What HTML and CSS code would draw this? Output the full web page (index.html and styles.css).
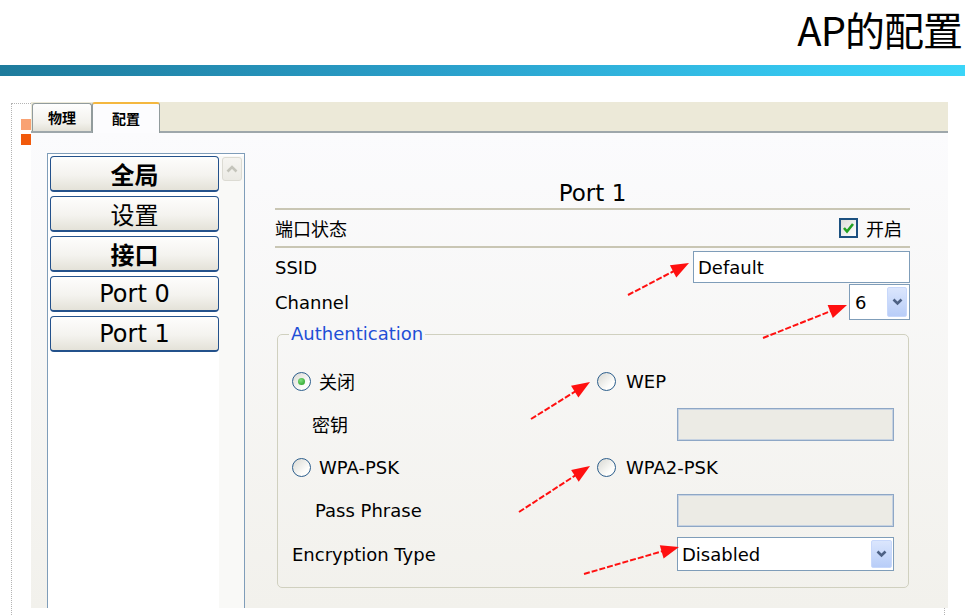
FILE: index.html
```html
<!DOCTYPE html>
<html>
<head>
<meta charset="utf-8">
<title>AP的配置</title>
<link rel="stylesheet" href="styles.css">
</head>
<body>
<header class="head"><h1 class="title">AP的配置</h1></header>
<div class="bar"></div>
<div class="frame">
  <div class="gutter"><span class="sq sq-light"></span><span class="sq sq-dark"></span></div>
  <div class="app">
    <div class="tabs">
      <div class="tab">物理</div>
      <div class="tab tab-active">配置</div>
    </div>
    <div class="content">
      <div class="list">
        <div class="list-items">
          <div class="btn bold">全局</div>
          <div class="btn">设置</div>
          <div class="btn bold">接口</div>
          <div class="btn latin">Port 0</div>
          <div class="btn latin">Port 1</div>
        </div>
        <div class="scroll">
          <div class="scroll-up"><svg width="12" height="8" viewBox="0 0 12 8"><path d="M1.5 6.5 L6 2 L10.5 6.5" fill="none" stroke="#c4c4bb" stroke-width="2.6"/></svg></div>
        </div>
      </div>
      <div class="panel">
        <div class="panel-title">Port 1</div>
        <div class="row status">
          <span>端口状态</span>
          <span class="check"><span class="cbox"><svg width="13" height="12" viewBox="0 0 13 12"><path d="M2 6 L5 9.5 L11 2" fill="none" stroke="#21a121" stroke-width="2.6"/></svg></span>开启</span>
        </div>
        <div class="row ssid">
          <span>SSID</span>
          <div class="input">Default</div>
        </div>
        <div class="row channel">
          <span>Channel</span>
          <div class="select select-small"><span>6</span><span class="drop"><svg width="11" height="8" viewBox="0 0 11 8"><path d="M1.5 1.5 L5.5 5.5 L9.5 1.5" fill="none" stroke="#4d6185" stroke-width="2.6"/></svg></span></div>
        </div>
        <fieldset class="auth">
          <legend>Authentication</legend>
          <div class="auth-grid">
            <div class="opt"><span class="radio on"><span class="dot"></span></span>关闭</div>
            <div class="opt opt-r"><span class="radio"></span>WEP</div>
            <div class="key-label">密钥</div>
            <div class="field"></div>
            <div class="opt"><span class="radio"></span>WPA-PSK</div>
            <div class="opt opt-r"><span class="radio"></span>WPA2-PSK</div>
            <div class="pass-label">Pass Phrase</div>
            <div class="field"></div>
            <div>Encryption Type</div>
            <div class="select select-wide"><span>Disabled</span><span class="drop drop-wide"><svg width="11" height="8" viewBox="0 0 11 8"><path d="M1.5 1.5 L5.5 5.5 L9.5 1.5" fill="none" stroke="#4d6185" stroke-width="2.6"/></svg></span></div>
          </div>
        </fieldset>
      </div>
    </div>
  </div>
</div>
<svg class="arrows" width="965" height="615" viewBox="0 0 965 615">
  <g stroke="#ff1010" stroke-width="2" stroke-dasharray="6 2" fill="none">
    <line x1="628" y1="295" x2="674" y2="271"/>
    <line x1="763" y1="338" x2="831" y2="311"/>
    <line x1="531" y1="419" x2="576" y2="391"/>
    <line x1="519" y1="512" x2="576" y2="475"/>
    <line x1="584" y1="574" x2="663" y2="551"/>
  </g>
  <g fill="#ff1010">
    <polygon points="689,263 676.3,277.6 669.9,265.2"/>
    <polygon points="847,305 832.8,318.1 827.6,305.1"/>
    <polygon points="590,382 578.4,397.5 571,385.7"/>
    <polygon points="590,466 578.7,481.7 571.1,469.9"/>
    <polygon points="679,547 663.6,558.6 659.8,545.2"/>
  </g>
</svg>
</body>
</html>
```

FILE: styles.css
```css
* { box-sizing: border-box; }
html, body { margin: 0; }
body {
  width: 965px;
  height: 615px;
  overflow: hidden;
  position: relative;
  background: #fff;
  color: #000;
  font-family: "DejaVu Sans", "Noto Sans CJK SC", sans-serif;
}

.head {
  height: 65px;
  display: flex;
  justify-content: flex-end;
  align-items: flex-start;
  padding: 8px 3px 0 0;
}
.title {
  margin: 0;
  font: 400 40px/42px "Noto Sans CJK SC", sans-serif;
  letter-spacing: -1px;
}
.bar {
  height: 11px;
  background: linear-gradient(to right, #1e7b9c 0%, #2a9fca 45%, #36c8f0 85%, #3bd5f8 100%);
}

.frame {
  margin: 27px 0 0 11px;
  width: 934px;
  height: 512px;
  border-left: 1px dotted #b4b4b4;
  border-top: 1px dotted #b4b4b4;
  border-right: 1px dotted #b4b4b4;
  display: flex;
}
.gutter {
  width: 19px;
  flex: none;
  display: flex;
  flex-direction: column;
  gap: 4px;
  padding: 15px 0 0 9px;
}
.sq { width: 10px; height: 11px; display: block; }
.sq-light { background: #f9a273; }
.sq-dark { background: #f15a0c; }

.app {
  width: 917px;
  height: 506px;
  flex: none;
  margin-top: -2px;
  display: flex;
  flex-direction: column;
  overflow: hidden;
}
.tabs {
  height: 31px;
  flex: none;
  background: #ece9d8;
  border-bottom: 2px solid #9ea7ab;
  display: flex;
  align-items: flex-end;
  padding-left: 1px;
}
.tab {
  width: 60px;
  height: 28px;
  border: 1px solid #919b9c;
  border-bottom: none;
  border-radius: 3px 3px 0 0;
  background: linear-gradient(#fefefe, #f2f1ec 70%, #e3e1d7);
  font: 700 14px/27px "Noto Sans CJK SC", sans-serif;
  text-align: center;
}
.tab-active {
  width: 68px;
  height: 31px;
  margin-bottom: -2px;
  border-top: 2px solid #f4b73f;
  background: #fcfcfe;
  line-height: 28px;
}

.content {
  flex: 1;
  display: flex;
  align-items: flex-start;
  overflow: hidden;
  padding: 20px 0 0 16px;
  background: linear-gradient(#fbfbfd, #f2f1ec);
}

.list {
  width: 198px;
  height: 470px;
  flex: none;
  border: 1px solid #7f9db9;
  background: #fff;
  display: flex;
  padding: 2px 0 0 2px;
}
.list-items {
  width: 169px;
  display: flex;
  flex-direction: column;
  gap: 4px;
}
.btn {
  height: 36px;
  border: 1px solid #23518b;
  border-bottom-width: 2px;
  border-radius: 4px;
  background: linear-gradient(#fdfdfc, #f4f3ef 55%, #e4e2d8);
  display: flex;
  align-items: center;
  justify-content: center;
  font: 400 24px/1 "Noto Sans CJK SC", sans-serif;
}
.btn.bold { font-weight: 700; }
.btn.latin { font-family: "DejaVu Sans", sans-serif; font-size: 24px; }
.scroll {
  flex: 1;
  background: #f9f9f7;
  padding: 1px 0 0 3px;
}
.scroll-up {
  width: 20px;
  height: 24px;
  border: 1px solid #dcdbd3;
  border-radius: 3px;
  background: linear-gradient(#f6f5f1, #ebeae4);
  display: flex;
  align-items: center;
  justify-content: center;
}

.panel {
  width: 635px;
  flex: none;
  margin-left: 30px;
  padding-top: 25px;
  font-size: 18px;
}
.panel-title {
  height: 32px;
  line-height: 30px;
  text-align: center;
  font-size: 23px;
  border-bottom: 2px solid #c9c6b4;
}
.row {
  display: flex;
  align-items: center;
  justify-content: space-between;
}
.status {
  height: 38px;
  border-bottom: 2px solid #c9c6b4;
  padding-right: 8px;
}
.check {
  display: flex;
  align-items: center;
  gap: 8px;
}
.cbox {
  width: 19px;
  height: 20px;
  border: 2px solid #1c5180;
  background: linear-gradient(135deg, #dcdcd7, #fff);
  display: flex;
  align-items: center;
  justify-content: center;
}
.ssid { height: 32px; margin-top: 3px; }
.channel { height: 36px; margin-top: 1px; }
.input {
  width: 217px;
  height: 32px;
  border: 1px solid #7f9db9;
  background: #fff;
  padding-left: 4px;
  display: flex;
  align-items: center;
}
.select {
  display: flex;
  align-items: center;
  justify-content: space-between;
  border: 1px solid #7f9db9;
  background: #fff;
}
.select-small { width: 61px; height: 36px; padding: 0 2px 0 5px; }
.select-wide { width: 217px; height: 34px; padding: 0 1px 0 4px; margin-left: 80px; }
.drop {
  width: 20px;
  height: 30px;
  border: 1px solid #c8d8fb;
  border-radius: 2px;
  background: linear-gradient(#dbe6fd, #b8cdf8);
  display: flex;
  align-items: center;
  justify-content: center;
}
.drop-wide { width: 21px; height: 28px; }

.auth {
  margin: 2px 0 0 2px;
  width: 632px;
  min-width: 0;
  border: 1px solid #d0d0bf;
  border-radius: 5px;
  padding: 14px 14px 11px 14px;
}
.auth legend {
  padding: 0 2px;
  margin-left: -3px;
  color: #1f4fd6;
  font-size: 18px;
  line-height: 24px;
}
.auth-grid {
  display: grid;
  grid-template-columns: 305px 297px;
  grid-template-rows: 42px 44px 42px 44px 44px;
  align-items: center;
}
.opt {
  display: flex;
  align-items: center;
  gap: 8px;
}
.opt-r { gap: 10px; }
.radio {
  width: 19px;
  height: 19px;
  flex: none;
  border-radius: 50%;
  border: 1.5px solid #2c5e8c;
  background: linear-gradient(135deg, #d8d8d2, #fdfdfb 70%);
  display: flex;
  align-items: center;
  justify-content: center;
}
.dot {
  width: 7px;
  height: 7px;
  border-radius: 50%;
  background: radial-gradient(circle at 40% 35%, #7fe07f, #1f9a1f);
}
.key-label { padding-left: 20px; }
.pass-label { padding-left: 23px; }
.field {
  margin-left: 80px;
  width: 217px;
  height: 33px;
  border: 1px solid #8ea7c6;
  box-shadow: inset 0 0 0 1px #c6d2e1;
  background: #ecebe5;
}

.arrows {
  position: absolute;
  left: 0;
  top: 0;
  pointer-events: none;
}
```
